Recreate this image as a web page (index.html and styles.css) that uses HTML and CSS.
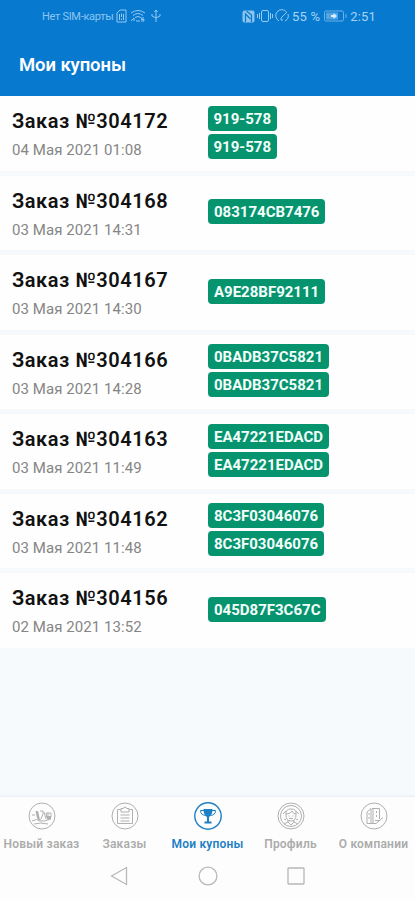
FILE: index.html
```html
<!DOCTYPE html>
<html lang="ru">
<head>
<meta charset="utf-8">
<meta name="viewport" content="width=device-width">
<title>Мои купоны</title>
<link rel="stylesheet" href="styles.css">
</head>
<body>
<header class="top">
  <div class="status">
    <div class="status-left">
      <span class="carrier">Нет SIM-карты</span>
      <svg class="ico" width="11" height="14" viewBox="0 0 11 14"><path d="M1 4l3-3h6v12H1z"/><path d="M5.500 4.500v3.500M5.500 9.500v1.500M3.500 5v6M7.500 5v6"/></svg>
      <svg class="ico" width="16" height="14" viewBox="0 0 16 14"><path d="M1 4q7-5 14 0M3 6.500q5-4 10 0M5 8.500q3-2 6 0M1 12l3-3v3M6 12h4M14 9h-2.500v1.500H14V12h-3"/></svg>
      <svg class="ico usb" width="10" height="14" viewBox="0 0 10 14"><path d="M5 1v12M1 5v2l4 2 4-2V5M3.500 3L5 1l1.500 2"/></svg>
    </div>
    <div class="status-right">
      <svg class="ico nfc" width="13" height="13" viewBox="0 0 13 13"><rect class="solid" x="0.500" y="0.500" width="12" height="12" rx="2"/><path d="M3.500 12V4l5 5M4.500 1l5 4v7"/></svg>
      <svg class="ico" width="16" height="14" viewBox="0 0 16 14"><rect x="4.500" y="1.500" width="7" height="11" rx="1.500"/><path d="M2.500 4v6M.5 5v4M13.500 4v6M15.500 5v4"/></svg>
      <svg class="ico" width="15" height="14" viewBox="0 0 15 14"><path d="M4 12A6 6 0 1 1 11.500 3M13 5a6 6 0 0 1-3 7M6 9l6-6M6 9v2h2"/></svg>
      <span class="percent">55 %</span>
      <svg class="ico battery" width="23" height="12" viewBox="0 0 23 12"><rect x=".5" y="1" width="19" height="10" rx="1.500"/><rect class="charge" x="2" y="2.500" width="12" height="7"/><path d="M22 4v4"/><path class="bolt" d="M9.500 3v2H7v2h2.500v2L13 6z"/></svg>
      <span class="clock">2:51</span>
    </div>
  </div>
  <h1>Мои купоны</h1>
</header>
<main class="orders">
  <article class="order"><div class="info"><h2>Заказ №304172</h2><time>04 Мая 2021 01:08</time></div><div class="codes"><span class="short">919-578</span><span class="short">919-578</span></div></article>
  <article class="order"><div class="info"><h2>Заказ №304168</h2><time>03 Мая 2021 14:31</time></div><div class="codes"><span>083174CB7476</span></div></article>
  <article class="order"><div class="info"><h2>Заказ №304167</h2><time>03 Мая 2021 14:30</time></div><div class="codes"><span>A9E28BF92111</span></div></article>
  <article class="order"><div class="info"><h2>Заказ №304166</h2><time>03 Мая 2021 14:28</time></div><div class="codes"><span>0BADB37C5821</span><span>0BADB37C5821</span></div></article>
  <article class="order"><div class="info"><h2>Заказ №304163</h2><time>03 Мая 2021 11:49</time></div><div class="codes"><span>EA47221EDACD</span><span>EA47221EDACD</span></div></article>
  <article class="order"><div class="info"><h2>Заказ №304162</h2><time>03 Мая 2021 11:48</time></div><div class="codes"><span>8C3F03046076</span><span>8C3F03046076</span></div></article>
  <article class="order"><div class="info"><h2>Заказ №304156</h2><time>02 Мая 2021 13:52</time></div><div class="codes"><span>045D87F3C67C</span></div></article>
</main>
<nav class="tabs">
  <a class="tab"><svg width="28" height="28" viewBox="0 0 28 28"><circle cx="14" cy="14" r="13"/><path d="M4 13h3M8 9l2 8 3 1M12 9h3v3l-2 5M16 10l2 7M18 11h5v4h-4zM20 11v7M4 19q5-3 8 0h4l7-2M6 22q6-2 14 0"/><path class="fill" d="M8 9h2l2 9-3-2zM18 14h5v3h-4z"/></svg><span>Новый заказ</span></a>
  <a class="tab"><svg width="28" height="28" viewBox="0 0 28 28"><circle cx="14" cy="14" r="13"/><path d="M10 7.500H6.500v14h15v-14H18M10 6.500h2.500a1.500 1.500 0 0 1 3 0H18V10h-8zM9.500 13h9M9.500 16h9M9.500 19h9"/></svg><span>Заказы</span></a>
  <a class="tab active"><svg width="28" height="28" viewBox="0 0 28 28"><circle cx="14" cy="14" r="13.200"/><path class="handles" d="M10 8.500H6.500q0 4.500 5 5M18 8.500h3.500q0 4.500-5 5"/><path class="fill" d="M9.500 7h9q0 6-3.500 8v4.500h2.500v2h-7v-2H13V15q-3.500-2-3.500-8z"/></svg><span>Мои купоны</span></a>
  <a class="tab"><svg width="28" height="28" viewBox="0 0 28 28"><circle cx="14" cy="14" r="13"/><circle cx="14" cy="14" r="10.500"/><path d="M9 13q-1-6 5-6t5 6q0 6-5 6t-5-6zM9 12q5 0 6-3 1 3 4 3M11 18v2l-4 2M17 18v2l4 2M11 20l3 3 3-3M11.500 14h1M15.500 14h1M12 16.500h4M6 12l3-3M22 12l-3-3M7 17l2 1M21 17l-2 1"/></svg><span>Профиль</span></a>
  <a class="tab"><svg width="28" height="28" viewBox="0 0 28 28"><circle cx="14" cy="14" r="13"/><path d="M7 21.500V10l4-3.500v15M12 6.500h7.500V17M7 21.500h9l7-6M9 11v2M9 15v2M13 6.500v15M16.500 9v2M16.500 13v2M15 18.500h4.500"/></svg><span>О компании</span></a>
</nav>
<footer class="system">
  <svg width="18" height="22" viewBox="0 0 18 22"><path d="M1.500 11L16.500 2.500v17z"/></svg>
  <svg width="20" height="20" viewBox="0 0 20 20"><circle cx="10" cy="10" r="8.900"/></svg>
  <svg width="18" height="18" viewBox="0 0 18 18"><rect x="1" y="1" width="16" height="16" rx=".5"/></svg>
</footer>
</body>
</html>
```
FILE: styles.css
```css
* { box-sizing: border-box; }
body {
  margin: 0;
  height: 900px;
  display: flex;
  flex-direction: column;
  overflow: hidden;
  background: #f6fafd;
  font-family: Roboto, "Liberation Sans", sans-serif;
}
svg { fill: none; flex: none; }
.top {
  height: 96px;
  flex: none;
  background: #0779cf;
  color: #fff;
}
.status {
  height: 32px;
  display: flex;
  justify-content: space-between;
  padding: 0 39px 0 42px;
  color: #a5d3f5;
}
.status-left, .status-right { display: flex; align-items: center; }
.status-left { gap: 3px; }
.status-right { gap: 2px; }
.ico { stroke: #94c9f2; stroke-width: 1; }
.usb { margin-left: 2px; }
.nfc .solid { fill: #8cc4ef; stroke: none; }
.nfc path { stroke: #0779cf; stroke-width: 1.2; }
.battery { margin: 0 1px 0 2px; stroke: #6eb3e8; }
.battery .charge { fill: #51a3e2; stroke: none; }
.battery .bolt { fill: #d9f0ff; stroke: none; }
.carrier { font-size: 11px; letter-spacing: -0.3px; color: #8cc6f2; }
.percent, .clock { font-size: 13px; letter-spacing: 0.2px; white-space: nowrap; }
h1 {
  margin: 20px 0 0 19px;
  font-size: 18.5px;
  line-height: 26px;
  font-weight: 600;
  letter-spacing: -0.1px;
}
.orders { display: flex; flex-direction: column; gap: 5px; flex: 1; }
.order {
  height: 74.5px;
  display: grid;
  grid-template-columns: 196px 1fr;
  align-items: center;
  padding-left: 12px;
  background: #fefefe;
}
.info { padding-top: 3px; }
h2 {
  margin: 0 0 5px;
  font-size: 20px;
  line-height: 26px;
  font-weight: 600;
  color: #111;
  letter-spacing: 0.55px;
}
time {
  display: block;
  font-size: 15px;
  line-height: 22px;
  letter-spacing: 0.07px;
  color: #858585;
}
.codes {
  display: flex;
  flex-direction: column;
  align-items: flex-start;
  gap: 3px;
  padding-bottom: 2px;
}
.codes span {
  height: 25px;
  padding: 0 6px;
  border-radius: 4px;
  background: #06946f;
  color: #f4fffb;
  font-size: 15px;
  line-height: 26px;
  font-weight: 700;
}
.codes .short { padding: 0 5.5px; }
.tabs {
  height: 58px;
  flex: none;
  display: grid;
  grid-template-columns: repeat(5, 1fr);
  background: #fdfdfd;
  box-shadow: 0 -1px 2px #e5eaee;
}
.tab {
  display: flex;
  flex-direction: column;
  align-items: center;
  padding-top: 5px;
  gap: 6px;
  color: #acacac;
  font-size: 12px;
  line-height: 16px;
  font-weight: 600;
  letter-spacing: 0.22px;
  white-space: nowrap;
}
.tab svg { stroke: #b0b0b0; stroke-width: 1; }
.tab .fill { fill: #b0b0b0; stroke: none; }
.tab.active { color: #1d7fc4; }
.tab.active svg { stroke: #1d7fc4; stroke-width: 1.4; }
.tab.active .handles { stroke-width: 1; }
.tab.active .fill { fill: #1d7fc4; }
.system {
  height: 45px;
  flex: none;
  display: grid;
  grid-template-columns: 1fr 20px 1fr;
  align-items: center;
  padding-bottom: 3px;
  background: #fdfdfd;
}
.system svg { stroke: #b8b8b8; stroke-width: 1.3; }
.system svg:first-child { justify-self: end; margin-right: 70px; }
.system svg:last-child { margin-left: 69px; }
```
